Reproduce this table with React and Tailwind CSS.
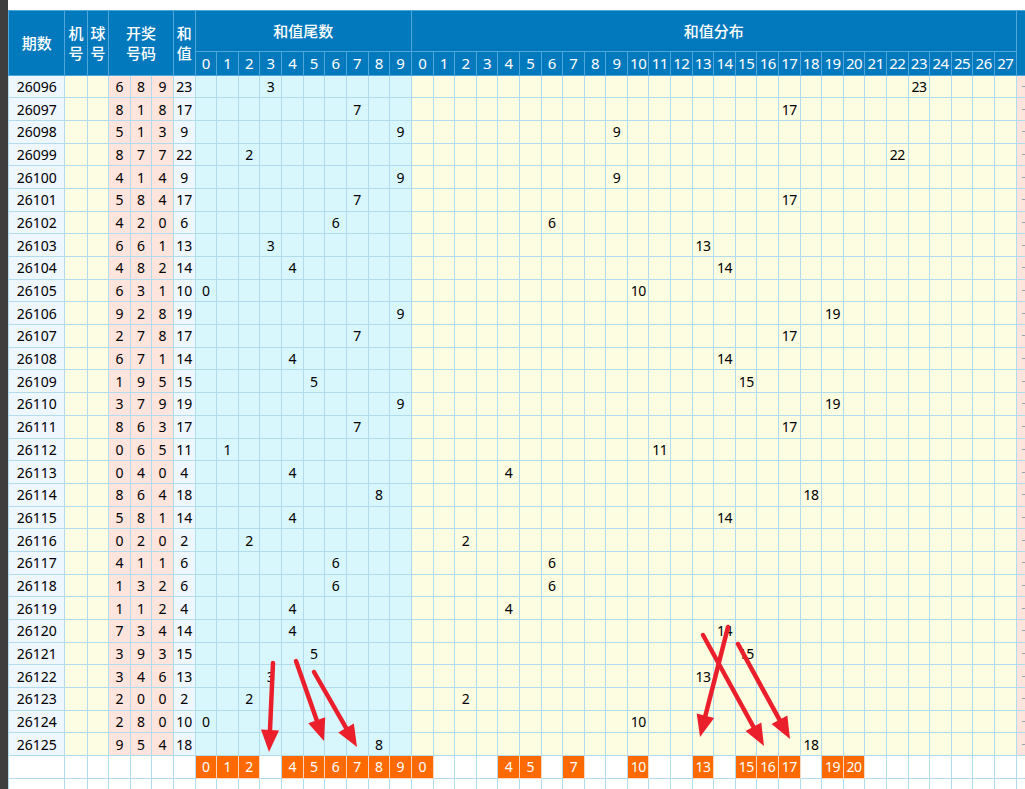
import React from "react";

const draws = [
  [26096, "689"], [26097, "818"], [26098, "513"], [26099, "877"], [26100, "414"],
  [26101, "584"], [26102, "420"], [26103, "661"], [26104, "482"], [26105, "631"],
  [26106, "928"], [26107, "278"], [26108, "671"], [26109, "195"], [26110, "379"],
  [26111, "863"], [26112, "065"], [26113, "040"], [26114, "864"], [26115, "581"],
  [26116, "020"], [26117, "411"], [26118, "132"], [26119, "112"], [26120, "734"],
  [26121, "393"], [26122, "346"], [26123, "200"], [26124, "280"], [26125, "954"],
];

const tailHit = [0, 1, 2, 4, 5, 6, 7, 8, 9];
const sumHit = [0, 4, 5, 7, 10, 13, 15, 16, 17, 19, 20];

// hand drawn arrows on top of the chart: [x1, y1, x2, y2]
const arrows = [
  [273, 663, 269, 752],
  [296, 661, 324, 741],
  [314, 672, 357, 747],
  [728, 627, 700, 737],
  [703, 635, 764, 746],
  [738, 644, 790, 739],
];

const td = "border border-[#b3dbee] p-0 text-center align-middle h-[22.7px]";
const th = "border border-[#4ea6db] p-0 text-center align-middle font-medium";

const Arrow = ({ a }) => {
  const [x1, y1, x2, y2] = a;
  const len = Math.hypot(x2 - x1, y2 - y1);
  const dx = (x2 - x1) / len;
  const dy = (y2 - y1) / len;
  const bx = x2 - dx * 22;
  const by = y2 - dy * 22;
  const pts = `${x2},${y2} ${bx - dy * 9},${by + dx * 9} ${bx + dy * 9},${by - dx * 9}`;
  return (
    <g>
      <line x1={x1} y1={y1} x2={bx} y2={by} stroke="#ea1f2b" strokeWidth="4.5" strokeLinecap="round" />
      <polygon points={pts} fill="#ea1f2b" />
    </g>
  );
};

const App = () => {
  const tails = Array.from({ length: 10 }, (_, i) => i);
  const sums = Array.from({ length: 28 }, (_, i) => i);

  return (
    <div className="relative w-[1025px] h-[789px] overflow-hidden bg-white flex font-['Noto_Sans','Noto_Sans_CJK_SC',sans-serif] text-[14px] text-black">
      <div className="w-[8px] shrink-0 bg-[#3e3e3e]" />
      <div className="flex-1 overflow-hidden">
        <div className="h-[10px]" />
        <table className="table-fixed border-collapse w-[1052px]">
          <colgroup>
            <col className="w-[56.3px]" />
            <col className="w-[22.4px]" />
            <col className="w-[21.6px]" />
            <col className="w-[21.5px]" />
            <col className="w-[21.5px]" />
            <col className="w-[21.5px]" />
            <col className="w-[21.8px]" />
            {tails.map((i) => (
              <col key={"tc" + i} className="w-[21.63px]" />
            ))}
            {sums.map((i) => (
              <col key={"sc" + i} className="w-[21.6px]" />
            ))}
            <col className="w-[44px]" />
          </colgroup>
          <thead className="bg-[#0379bd] text-white text-[15px]">
            <tr className="h-[41px]">
              <th rowSpan={2} className={th}>期数</th>
              <th rowSpan={2} className={th + " leading-[20px]"}>机<br />号</th>
              <th rowSpan={2} className={th + " leading-[20px]"}>球<br />号</th>
              <th rowSpan={2} colSpan={3} className={th + " leading-[20px]"}>开奖<br />号码</th>
              <th rowSpan={2} className={th + " leading-[20px]"}>和<br />值</th>
              <th colSpan={10} className={th}>和值尾数</th>
              <th colSpan={28} className={th}>和值分布</th>
              <th rowSpan={2} className={th}></th>
            </tr>
            <tr className="h-[23px]">
              {tails.map((i) => (
                <th key={"th" + i} className={th + " font-normal"}>{i}</th>
              ))}
              {sums.map((i) => (
                <th key={"sh" + i} className={th + " font-normal tracking-[-0.5px]"}>{i}</th>
              ))}
            </tr>
          </thead>
          <tbody>
            {draws.map(([no, code]) => {
              const digits = code.split("").map(Number);
              const sum = digits[0] + digits[1] + digits[2];
              return (
                <tr key={no}>
                  <td className={td + " bg-[#eef6fe]"}>{no}</td>
                  <td className={td + " bg-[#fdfde3]"}></td>
                  <td className={td + " bg-[#fdfde3]"}></td>
                  {digits.map((d, i) => (
                    <td key={i} className={td + " bg-[#fde4dd]"}>{d}</td>
                  ))}
                  <td className={td + " bg-[#eef6fe]"}>{sum}</td>
                  {tails.map((i) => (
                    <td key={"t" + i} className={td + " bg-[#d8f7fd]"}>
                      {sum % 10 === i ? i : ""}
                    </td>
                  ))}
                  {sums.map((i) => (
                    <td key={"s" + i} className={td + " bg-[#fdfde1] tracking-[-0.5px]"}>
                      {sum === i ? i : ""}
                    </td>
                  ))}
                  <td className={td + " bg-[#fde4dd]"}>
                    <div className="ml-[5px] w-[4px] h-px bg-gray-400" />
                  </td>
                </tr>
              );
            })}
            <tr>
              <td className={td}></td>
              <td className={td}></td>
              <td className={td}></td>
              <td className={td}></td>
              <td className={td}></td>
              <td className={td}></td>
              <td className={td}></td>
              {tails.map((i) =>
                tailHit.includes(i) ? (
                  <td key={"ot" + i} className={td + " bg-[#fe6a00] text-white border-[#f3d6c4]"}>{i}</td>
                ) : (
                  <td key={"ot" + i} className={td}></td>
                )
              )}
              {sums.map((i) =>
                sumHit.includes(i) ? (
                  <td key={"os" + i} className={td + " bg-[#fe6a00] text-white border-[#f3d6c4] tracking-[-0.5px]"}>{i}</td>
                ) : (
                  <td key={"os" + i} className={td}></td>
                )
              )}
              <td className={td}></td>
            </tr>
            <tr>
              {Array.from({ length: 46 }, (_, i) => (
                <td key={"e" + i} className={td}></td>
              ))}
            </tr>
          </tbody>
        </table>
      </div>
      <svg className="absolute inset-0 pointer-events-none" width="1025" height="789">
        {arrows.map((a, i) => (
          <Arrow key={i} a={a} />
        ))}
      </svg>
    </div>
  );
};

export default App;
